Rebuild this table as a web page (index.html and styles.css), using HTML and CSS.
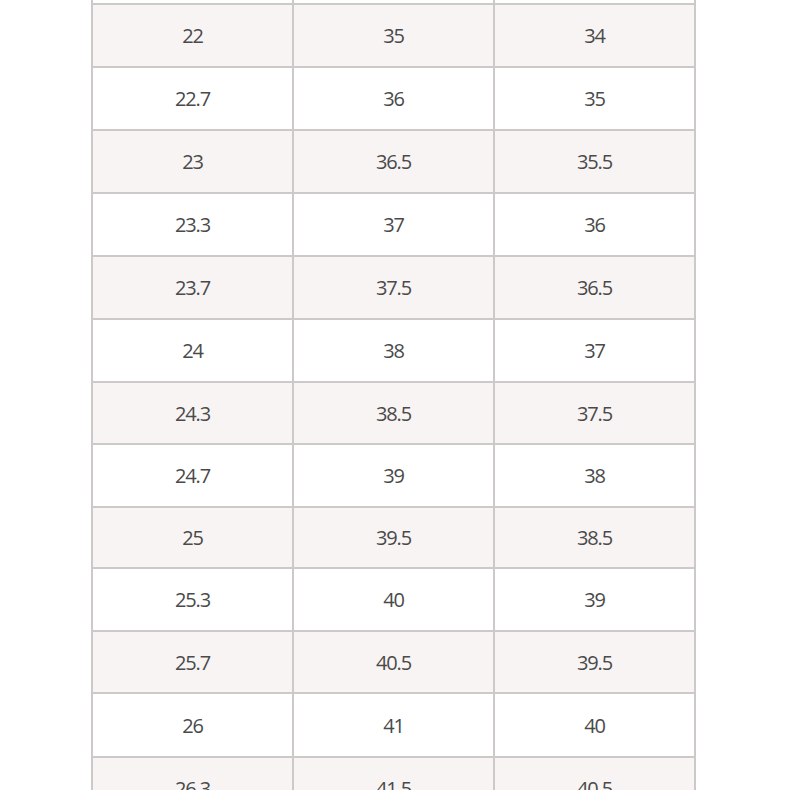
FILE: index.html
```html
<!DOCTYPE html>
<html>
<head>
<meta charset="utf-8">
<link rel="stylesheet" href="styles.css">
</head>
<body>
<div class="page">
<table class="sizes">
<tbody>
<tr class="head"><td></td><td></td><td></td></tr>
<tr class="alt"><td>22</td><td>35</td><td>34</td></tr>
<tr><td>22.7</td><td>36</td><td>35</td></tr>
<tr class="alt"><td>23</td><td>36.5</td><td>35.5</td></tr>
<tr><td>23.3</td><td>37</td><td>36</td></tr>
<tr class="alt"><td>23.7</td><td>37.5</td><td>36.5</td></tr>
<tr><td>24</td><td>38</td><td>37</td></tr>
<tr class="alt r62"><td>24.3</td><td>38.5</td><td>37.5</td></tr>
<tr><td>24.7</td><td>39</td><td>38</td></tr>
<tr class="alt r61"><td>25</td><td>39.5</td><td>38.5</td></tr>
<tr><td>25.3</td><td>40</td><td>39</td></tr>
<tr class="alt r62"><td>25.7</td><td>40.5</td><td>39.5</td></tr>
<tr class="r64"><td>26</td><td>41</td><td>40</td></tr>
<tr class="alt"><td>26.3</td><td>41.5</td><td>40.5</td></tr>
<tr><td>26.7</td><td>42</td><td>41</td></tr>
</tbody>
</table>
</div>
</body>
</html>
```
FILE: styles.css
```css
html, body {
  margin: 0;
  padding: 0;
  background: #ffffff;
  overflow: hidden;
}
.page {
  width: 790px;
  height: 790px;
  overflow: hidden;
}
.sizes {
  margin-left: 91px;
  margin-top: -60px;
  border-collapse: collapse;
  font-family: "Open Sans", "Noto Sans", sans-serif;
  font-size: 20px;
  letter-spacing: -1.2px;
  color: #4a4a4a;
}
.sizes td {
  width: 199px;
  height: 61px;
  padding: 0;
  border: 2px solid #cdc9c9;
  text-align: center;
  vertical-align: middle;
}
.sizes tr.r61 td {
  height: 59px;
}
.sizes tr.r62 td {
  height: 60px;
}
.sizes tr.r64 td {
  height: 62px;
}
.sizes tr.alt td {
  background: #f8f4f4;
}
.sizes tr.head td {
  background: #ffffff;
}
```
